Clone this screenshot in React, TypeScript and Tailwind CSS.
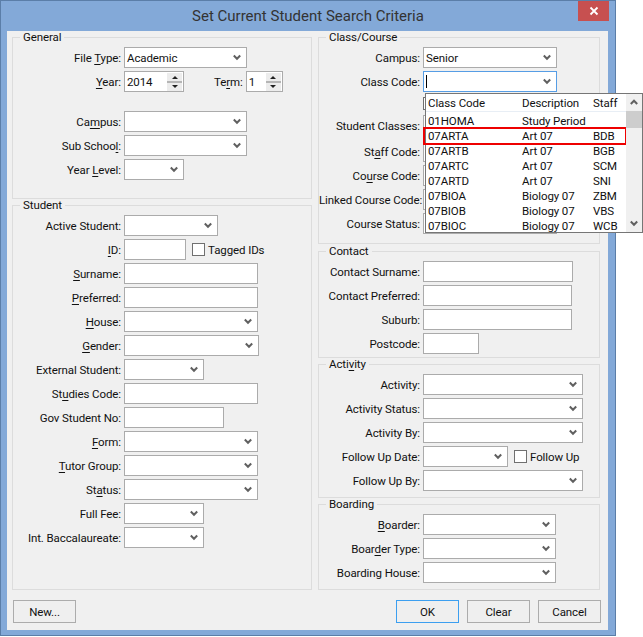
import type { ReactNode } from 'react';

const fieldBorder = 'border border-[#ababab] bg-white';

// underlines the mnemonic letter of a label
const Key = ({ children }: { children: ReactNode }) => <span className="underline underline-offset-2">{children}</span>;

const Chevron = () => (
  <svg width="8" height="7" viewBox="0 0 8 7" className="shrink-0">
    <path d="M0.8 1.5 L4 4.8 L7.2 1.5" fill="none" stroke="#606060" strokeWidth="2" />
  </svg>
);

const Combo = ({ width, value, focused }: { width: number; value?: string; focused?: boolean }) => (
  <div
    style={{ width }}
    className={`h-[21px] shrink-0 border bg-white flex items-center justify-between pl-[2px] pr-[5px] ${focused ? 'border-[#569de5]' : 'border-[#ababab]'}`}
  >
    {focused ? <div className="w-px h-[13px] bg-black" /> : <span>{value}</span>}
    <Chevron />
  </div>
);

const TextBox = ({ width }: { width: number }) => <div style={{ width }} className={`h-[21px] shrink-0 ${fieldBorder}`} />;

const Spin = ({ width, value }: { width: number; value: string }) => (
  <div style={{ width }} className={`h-[21px] shrink-0 flex justify-between items-center pl-[2px] ${fieldBorder}`}>
    <span>{value}</span>
    <div className="w-[15px] h-[18px] mr-px flex flex-col items-center bg-[#ececec]">
      <svg width="8" height="8" viewBox="0 0 8 8"><path d="M1 6 L4 3 L7 6Z" fill="#202020" /></svg>
      <div className="h-[2px] w-full bg-[#b5b5b5]" />
      <svg width="8" height="8" viewBox="0 0 8 8"><path d="M1 2 L4 5 L7 2Z" fill="#202020" /></svg>
    </div>
  </div>
);

const Check = ({ label }: { label: string }) => (
  <div className="flex items-center gap-[3px]">
    <div className="w-[13px] h-[13px] border border-[#707070] bg-white" />
    <span>{label}</span>
  </div>
);

const Row = ({ label, labelWidth, children }: { label: ReactNode; labelWidth: number; children: ReactNode }) => (
  <div className="flex items-center h-[21px] mb-[3px]">
    <div style={{ width: labelWidth }} className="text-right pr-[3px] shrink-0 whitespace-nowrap">{label}</div>
    {children}
  </div>
);

const Group = ({ title, className, children }: { title: ReactNode; className: string; children: ReactNode }) => (
  <fieldset className={`border border-[#dcdcdc] pt-[3px] ${className}`}>
    <legend className="ml-[7px] px-[3px] h-[13px] leading-[13px]">{title}</legend>
    {children}
  </fieldset>
);

const classRows = [
  ['01HOMA', 'Study Period', ''],
  ['07ARTA', 'Art 07', 'BDB'],
  ['07ARTB', 'Art 07', 'BGB'],
  ['07ARTC', 'Art 07', 'SCM'],
  ['07ARTD', 'Art 07', 'SNI'],
  ['07BIOA', 'Biology 07', 'ZBM'],
  ['07BIOB', 'Biology 07', 'VBS'],
  ['07BIOC', 'Biology 07', 'WCB'],
];

const ClassCodeList = () => (
  <div className="absolute left-[425px] top-[93px] w-[218px] h-[140px] bg-white border border-[#767676] flex z-10">
    <div className="w-[200px] relative">
      <div className="h-[17px] flex items-center pl-[2px] border-b border-[#e8eef5] mb-[2px] mt-[1px]">
        <span className="w-[94px]">Class Code</span>
        <span className="w-[71px]">Description</span>
        <span>Staff</span>
      </div>
      {classRows.map(r => (
        <div key={r[0]} className="h-[15px] leading-[15px] flex pl-[2px] whitespace-nowrap">
          <span className="w-[94px]">{r[0]}</span>
          <span className="w-[71px]">{r[1]}</span>
          <span>{r[2]}</span>
        </div>
      ))}
      <div className="absolute left-[-3px] top-[33px] w-[204px] h-[18px] border-2 border-[#ee0000]" />
    </div>
    <div className="flex-1 bg-[#f0f0f0] flex flex-col items-center justify-between py-[5px] relative">
      <svg width="8" height="7" viewBox="0 0 8 7"><path d="M0.8 5 L4 1.7 L7.2 5" fill="none" stroke="#606060" strokeWidth="2" /></svg>
      <div className="absolute top-[17px] left-0 w-full h-[17px] bg-[#cdcdcd]" />
      <Chevron />
    </div>
  </div>
);

const Button = ({ children, primary }: { children: ReactNode; primary?: boolean }) => (
  <div className={`w-[63px] h-[23px] flex items-center justify-center border bg-[#efefef] ${primary ? 'border-[#3c9ff0]' : 'border-[#acacac]'}`}>
    {children}
  </div>
);

export default function App() {
  return (
    <div
      className="relative w-[643px] h-[637px] bg-white text-[11.5px] tracking-[-0.1px] leading-[16px] text-[#111]"
      style={{ fontFamily: 'Roboto, "Noto Sans", sans-serif' }}
    >
      <div className="w-[616px] h-[636px] bg-[#83a9d8] border border-[#5b7ea8] flex flex-col">
        <div className="h-[30px] shrink-0 flex items-center relative">
          <div className="flex-1 text-center text-[15px] tracking-normal text-[#333]">Set Current Student Search Criteria</div>
          <div className="absolute right-[6px] top-0 w-[31px] h-[20px] bg-[#c75050] flex items-center justify-center">
            <svg width="10" height="10" viewBox="0 0 10 10"><path d="M1.5 1.5 L8.5 8.5 M8.5 1.5 L1.5 8.5" stroke="#fff" strokeWidth="1.8" /></svg>
          </div>
        </div>
        <div className="flex-1 ml-[6px] mr-[7px] mb-[5px] bg-[#f0f0f0] pl-[5px] pr-[8px] flex flex-col">
          <div className="flex gap-[6px]">
            <div className="w-[300px] flex flex-col">
              <Group title="General" className="h-[168px]">
                <Row labelWidth={111} label={<>File <Key>T</Key>ype:</>}><Combo width={123} value="Academic" /></Row>
                <Row labelWidth={111} label={<><Key>Y</Key>ear:</>}>
                  <Spin width={60} value="2014" />
                  <span className="ml-[30px] mr-[3px]">Te<Key>r</Key>m:</span>
                  <Spin width={37} value="1" />
                </Row>
                <div className="h-[16px]" />
                <Row labelWidth={111} label={<>Ca<Key>m</Key>pus:</>}><Combo width={123} /></Row>
                <Row labelWidth={111} label={<>Sub Schoo<Key>l</Key>:</>}><Combo width={123} /></Row>
                <Row labelWidth={111} label={<>Year <Key>L</Key>evel:</>}><Combo width={60} /></Row>
              </Group>
              <Group title="Student" className="h-[391px]">
                <Row labelWidth={111} label="Active Student:"><Combo width={94} /></Row>
                <Row labelWidth={111} label={<><Key>I</Key>D:</>}>
                  <TextBox width={62} />
                  <div className="ml-[6px]"><Check label="Tagged IDs" /></div>
                </Row>
                <Row labelWidth={111} label={<><Key>S</Key>urname:</>}><TextBox width={134} /></Row>
                <Row labelWidth={111} label={<><Key>P</Key>referred:</>}><TextBox width={134} /></Row>
                <Row labelWidth={111} label={<><Key>H</Key>ouse:</>}><Combo width={134} /></Row>
                <Row labelWidth={111} label={<><Key>G</Key>ender:</>}><Combo width={135} /></Row>
                <Row labelWidth={111} label="External Student:"><Combo width={80} /></Row>
                <Row labelWidth={111} label={<>St<Key>u</Key>dies Code:</>}><TextBox width={134} /></Row>
                <Row labelWidth={111} label="Gov Student No:"><TextBox width={100} /></Row>
                <Row labelWidth={111} label={<><Key>F</Key>orm:</>}><Combo width={134} /></Row>
                <Row labelWidth={111} label={<><Key>T</Key>utor Group:</>}><Combo width={134} /></Row>
                <Row labelWidth={111} label={<>St<Key>a</Key>tus:</>}><Combo width={134} /></Row>
                <Row labelWidth={111} label="Full Fee:"><Combo width={80} /></Row>
                <Row labelWidth={111} label="Int. Baccalaureate:"><Combo width={80} /></Row>
              </Group>
            </div>
            <div className="w-[282px] flex flex-col">
              <Group title="Class/Course" className="h-[213px]">
                <Row labelWidth={104} label="Campus:"><Combo width={134} value="Senior" /></Row>
                <Row labelWidth={104} label="Class Code:">
                  <Combo width={134} focused />
                </Row>
                <div className="h-[20px] pt-[2px] pl-[104px]">
                  <div className="w-[13px] h-[13px] border border-[#707070] bg-white" />
                </div>
                <Row labelWidth={104} label="Student Classes:"><Combo width={134} /></Row>
                <div className="h-[2px]" />
                <Row labelWidth={104} label={<>St<Key>a</Key>ff Code:</>}><Combo width={134} /></Row>
                <Row labelWidth={104} label={<>Co<Key>u</Key>rse Code:</>}><Combo width={134} /></Row>
                <Row labelWidth={104} label="Linked Course Code:"><Combo width={134} /></Row>
                <Row labelWidth={104} label="Course Status:"><Combo width={134} /></Row>
              </Group>
              <Group title="Contact" className="h-[113px] mt-px">
                <Row labelWidth={104} label="Contact Surname:"><TextBox width={150} /></Row>
                <Row labelWidth={104} label="Contact Preferred:"><TextBox width={149} /></Row>
                <Row labelWidth={104} label="Suburb:"><TextBox width={149} /></Row>
                <Row labelWidth={104} label="Postcode:"><TextBox width={56} /></Row>
              </Group>
              <Group title={<>Acti<Key>v</Key>ity</>} className="h-[140px]">
                <Row labelWidth={104} label="Activity:"><Combo width={160} /></Row>
                <Row labelWidth={104} label="Activity Status:"><Combo width={160} /></Row>
                <Row labelWidth={104} label="Activity By:"><Combo width={160} /></Row>
                <Row labelWidth={104} label="Follow Up Date:">
                  <Combo width={85} />
                  <div className="ml-[6px]"><Check label="Follow Up" /></div>
                </Row>
                <Row labelWidth={104} label="Follow Up By:"><Combo width={160} /></Row>
              </Group>
              <Group title="Boarding" className="h-[92px]">
                <Row labelWidth={104} label={<><Key>B</Key>oarder:</>}><Combo width={133} /></Row>
                <Row labelWidth={104} label={<>Boar<Key>d</Key>er Type:</>}><Combo width={133} /></Row>
                <Row labelWidth={104} label="Boarding House:"><Combo width={133} /></Row>
              </Group>
            </div>
          </div>
          <div className="flex mt-[10px] ml-px mr-[-1px] items-center">
            <Button>New...</Button>
            <div className="ml-auto flex gap-[8px]">
              <Button primary>OK</Button>
              <Button>Clear</Button>
              <Button>Cancel</Button>
            </div>
          </div>
        </div>
      </div>
      <ClassCodeList />
    </div>
  );
}
